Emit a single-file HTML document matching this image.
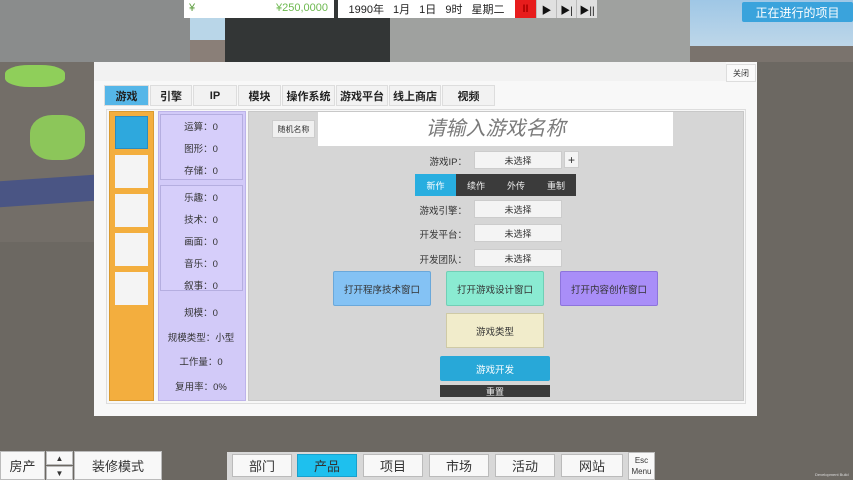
<!DOCTYPE html>
<html><head><meta charset="utf-8"><style>
*{box-sizing:border-box;margin:0;padding:0}
body{width:853px;height:480px;overflow:hidden;position:relative;background:#6c6862;font-family:"Liberation Sans","Noto Sans CJK SC",sans-serif;color:#333}
.a{position:absolute}
.c{display:flex;align-items:center;justify-content:center}
.tab{position:absolute;top:85px;height:21px;background:#f2f2f2;border:1px solid #ddd;font-size:11px;font-weight:bold;color:#222}
.stat{font-size:9.5px;color:#333;text-align:center;position:absolute;width:86px;left:158px}
.sel{position:absolute;left:474px;width:88px;height:18px;background:#f4f4f4;border:1px solid #ccc;font-size:9px;color:#333}
.lab{position:absolute;left:405px;width:62px;text-align:right;font-size:9.5px;color:#333}
.nb{position:absolute;top:454px;height:23px;background:#f8f8f8;border:1px solid #bbb;font-size:13px;color:#333}
.pb{position:absolute;top:0;width:20px;height:18px;background:#e0e0e0;font-size:10px;color:#111;border-left:1px solid #bbb}
</style></head><body>
<div class="a" style="left:0;top:0;width:853px;height:62px;background:#b9d6e8"></div>
<div class="a" style="left:690px;top:0;width:163px;height:62px;background:linear-gradient(#9fc7e6,#c8dcea)"></div>
<div class="a" style="left:680px;top:46px;width:173px;height:16px;background:#7a736d"></div>
<div class="a" style="left:0;top:0;width:190px;height:62px;background:#8a8c8c"></div>
<div class="a" style="left:190px;top:40px;width:40px;height:22px;background:#8a7f78"></div>
<div class="a" style="left:225px;top:0;width:165px;height:62px;background:#333636"></div>
<div class="a" style="left:390px;top:0;width:300px;height:62px;background:#9fa19f"></div>
<div class="a" style="left:0;top:62px;width:94px;height:180px;background:#736e68"></div>
<div class="a" style="left:0;top:178px;width:94px;height:26px;background:#4a5584;transform:skewY(-4deg)"></div>
<div class="a" style="left:30px;top:115px;width:55px;height:45px;background:#8cc65a;border-radius:40%"></div>
<div class="a" style="left:5px;top:65px;width:60px;height:22px;background:#8fcf5a;border-radius:40%"></div>
<div class="a" style="left:184px;top:0;width:150px;height:18px;background:#fff;font-size:11px"><span class="a" style="left:5px;top:2px;color:#5a9a3a">¥</span><span class="a" style="right:6px;top:2px;color:#6cb84e">¥250,0000</span></div>
<div class="a c" style="left:338px;top:0;width:177px;height:18px;background:#fff;font-size:11px;word-spacing:6px;color:#222">1990年 1月 1日 9时 星期二</div>
<div class="a c" style="left:515px;top:0;width:21px;height:18px;background:#e71c1c;color:#a00;font-size:11px;font-weight:bold">II</div>
<div class="pb c" style="left:536px">▶</div>
<div class="pb c" style="left:556px">▶|</div>
<div class="pb c" style="left:576px;width:21px">▶||</div>
<div class="a c" style="left:742px;top:2px;width:111px;height:20px;background:#3aa3dc;color:#fff;font-size:12px;border-radius:2px">正在进行的项目</div>
<div class="a" style="left:94px;top:62px;width:663px;height:354px;background:#f8f8f8"></div>
<div class="a" style="left:94px;top:62px;width:632px;height:19px;background:#f2f2f2"></div>
<div class="a c" style="left:726px;top:64px;width:30px;height:18px;background:#fafafa;border:1px solid #ddd;font-size:8px">关闭</div>
<div class="tab c" style="left:104px;width:45px;background:#55b6e8">游戏</div>
<div class="tab c" style="left:150px;width:42px">引擎</div>
<div class="tab c" style="left:193px;width:44px">IP</div>
<div class="tab c" style="left:238px;width:43px">模块</div>
<div class="tab c" style="left:282px;width:53px">操作系统</div>
<div class="tab c" style="left:336px;width:52px">游戏平台</div>
<div class="tab c" style="left:389px;width:52px">线上商店</div>
<div class="tab c" style="left:442px;width:53px">视频</div>
<div class="a" style="left:106px;top:109px;width:640px;height:295px;border:1px solid #ddd;background:#f7f7f7"></div>
<div class="a" style="left:109px;top:111px;width:45px;height:290px;background:#f3ae3e;border:1px solid #d99a30"></div>
<div class="a" style="left:115px;top:116px;width:33px;height:33px;background:#2ea8dd;border:1px solid #2a8cc0"></div>
<div class="a" style="left:115px;top:155px;width:33px;height:33px;background:#f4f4f4"></div>
<div class="a" style="left:115px;top:194px;width:33px;height:33px;background:#f4f4f4"></div>
<div class="a" style="left:115px;top:233px;width:33px;height:33px;background:#f4f4f4"></div>
<div class="a" style="left:115px;top:272px;width:33px;height:33px;background:#f4f4f4"></div>
<div class="a" style="left:158px;top:111px;width:88px;height:290px;background:#d2caf8;border:1px solid #bdb3ea"></div>
<div class="a" style="left:160px;top:114px;width:83px;height:66px;border:1px solid #b5aee0;background:#d6cefa"></div>
<div class="a" style="left:160px;top:185px;width:83px;height:106px;border:1px solid #b5aee0;background:#d6cefa"></div>
<div class="stat" style="top:119px">运算：0</div>
<div class="stat" style="top:141px">图形：0</div>
<div class="stat" style="top:163px">存储：0</div>
<div class="stat" style="top:190px">乐趣：0</div>
<div class="stat" style="top:212px">技术：0</div>
<div class="stat" style="top:234px">画面：0</div>
<div class="stat" style="top:256px">音乐：0</div>
<div class="stat" style="top:278px">叙事：0</div>
<div class="stat" style="top:305px">规模：0</div>
<div class="stat" style="top:330px">规模类型：小型</div>
<div class="stat" style="top:354px">工作量：0</div>
<div class="stat" style="top:379px">复用率：0%</div>
<div class="a" style="left:248px;top:111px;width:496px;height:290px;background:#d6d6d6;border:1px solid #c8c8c8"></div>
<div class="a c" style="left:272px;top:120px;width:43px;height:18px;background:#f0f0f0;border:1px solid #ccc;font-size:8px">随机名称</div>
<div class="a" style="left:318px;top:112px;width:355px;height:34px;background:#fff;font-size:20px;color:#7a7a7a;text-align:center;line-height:34px;font-style:italic">请输入游戏名称</div>
<div class="lab" style="top:154px">游戏IP：</div>
<div class="sel c" style="top:151px">未选择</div>
<div class="a c" style="left:564px;top:151px;width:15px;height:17px;background:#f4f4f4;border:1px solid #ccc;font-size:12px">+</div>
<div class="a" style="left:415px;top:174px;width:161px;height:22px;background:#3b3b3b"></div>
<div class="a c" style="left:415px;top:174px;width:41px;height:22px;background:#28aee0;color:#fff;font-size:9px">新作</div>
<div class="a c" style="left:456px;top:174px;width:40px;height:22px;color:#eee;font-size:9px">续作</div>
<div class="a c" style="left:496px;top:174px;width:40px;height:22px;color:#eee;font-size:9px">外传</div>
<div class="a c" style="left:536px;top:174px;width:40px;height:22px;color:#eee;font-size:9px">重制</div>
<div class="lab" style="top:203px">游戏引擎：</div>
<div class="sel c" style="top:200px">未选择</div>
<div class="lab" style="top:227px">开发平台：</div>
<div class="sel c" style="top:224px">未选择</div>
<div class="lab" style="top:252px">开发团队：</div>
<div class="sel c" style="top:249px">未选择</div>
<div class="a c" style="left:333px;top:271px;width:98px;height:35px;background:#84c2f4;border:1px solid #6aa8da;font-size:9.5px;border-radius:2px">打开程序技术窗口</div>
<div class="a c" style="left:446px;top:271px;width:98px;height:35px;background:#8aebd2;border:1px solid #70cfb6;font-size:9.5px;border-radius:2px">打开游戏设计窗口</div>
<div class="a c" style="left:560px;top:271px;width:98px;height:35px;background:#a98ef8;border:1px solid #8d74dc;font-size:9.5px;border-radius:2px">打开内容创作窗口</div>
<div class="a c" style="left:446px;top:313px;width:98px;height:35px;background:#f1eccb;border:1px solid #cfcaa6;font-size:9.5px">游戏类型</div>
<div class="a c" style="left:440px;top:356px;width:110px;height:25px;background:#28a8d8;color:#fff;font-size:9.5px;border-radius:2px">游戏开发</div>
<div class="a c" style="left:440px;top:385px;width:110px;height:12px;background:#3a3a3a;color:#eee;font-size:9px">重置</div>
<div class="a c" style="left:0;top:451px;width:45px;height:29px;background:#f8f8f8;border:1px solid #bbb;font-size:13px">房产</div>
<div class="a c" style="left:46px;top:451px;width:27px;height:14px;background:#f8f8f8;border:1px solid #bbb;font-size:8px">▲</div>
<div class="a c" style="left:46px;top:466px;width:27px;height:14px;background:#f8f8f8;border:1px solid #bbb;font-size:8px">▼</div>
<div class="a c" style="left:74px;top:451px;width:88px;height:29px;background:#f8f8f8;border:1px solid #bbb;font-size:13px">装修模式</div>
<div class="a" style="left:227px;top:452px;width:401px;height:28px;background:#d8d8d8"></div>
<div class="nb c" style="left:232px;width:60px">部门</div>
<div class="nb c" style="left:297px;width:60px;background:#1ec0ee;border-color:#19a0cc">产品</div>
<div class="nb c" style="left:363px;width:60px">项目</div>
<div class="nb c" style="left:429px;width:60px">市场</div>
<div class="nb c" style="left:495px;width:60px">活动</div>
<div class="nb c" style="left:561px;width:62px">网站</div>
<div class="a c" style="left:628px;top:452px;width:27px;height:28px;background:#f8f8f8;border:1px solid #bbb;font-size:8px;line-height:11px;text-align:center;flex-direction:column"><span>Esc</span><span>Menu</span></div>
<div class="a" style="left:815px;top:472px;font-size:4px;color:#ddd">Development Build</div>
</body></html>
